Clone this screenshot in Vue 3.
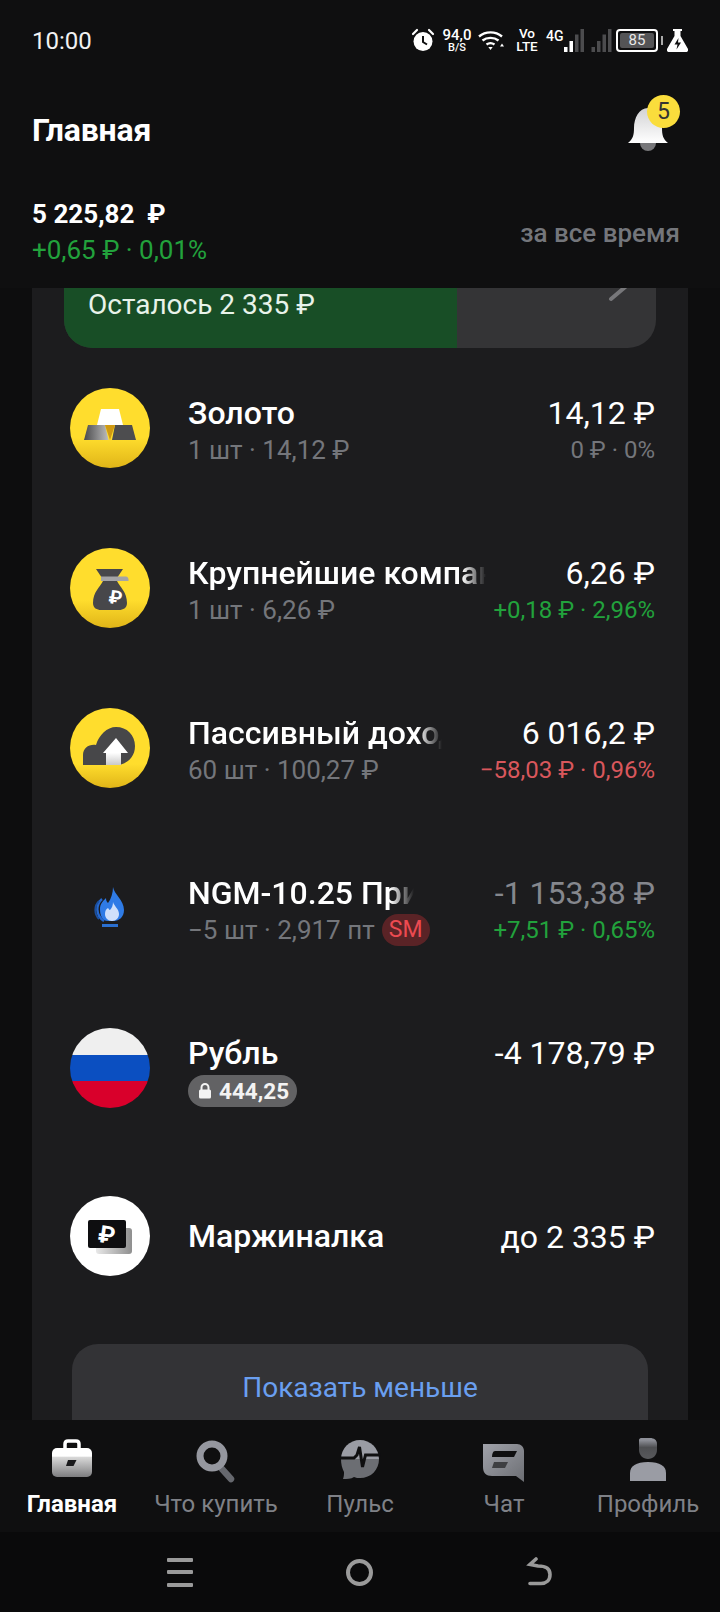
<script setup>
const rows = [
  { id: 'gold', name: 'Золото', sub: '1 шт · 14,12 ₽', value: '14,12 ₽', change: '0 ₽ · 0%', tone: 'flat' },
  { id: 'bag', name: 'Крупнейшие компании', sub: '1 шт · 6,26 ₽', value: '6,26 ₽', change: '+0,18 ₽ · 2,96%', tone: 'up', nameWidth: 298 },
  { id: 'cloud', name: 'Пассивный доход', sub: '60 шт · 100,27 ₽', value: '6 016,2 ₽', change: '−58,03 ₽ · 0,96%', tone: 'down', nameWidth: 254 },
  { id: 'gas', name: 'NGM-10.25 Природный газ', sub: '−5 шт · 2,917 пт', value: '-1 153,38 ₽', change: '+7,51 ₽ · 0,65%', tone: 'up', nameWidth: 226, badge: 'SM', muted: true },
  { id: 'flag', name: 'Рубль', pill: '444,25', value: '-4 178,79 ₽' },
  { id: 'margin', name: 'Маржиналка', value: 'до 2 335 ₽', single: true },
]
const tabs = [
  { id: 'home', label: 'Главная', active: true },
  { id: 'search', label: 'Что купить' },
  { id: 'pulse', label: 'Пульс' },
  { id: 'chat', label: 'Чат' },
  { id: 'profile', label: 'Профиль' },
]
</script>

<template>
  <div class="screen">
    <header class="head">
      <div class="status">
        <span class="time">10:00</span>
        <div class="sys">
          <svg class="i-alarm" width="24" height="24" viewBox="0 0 24 24">
            <circle cx="12" cy="13.5" r="9.5" fill="#fff" />
            <path d="M12 8v6l4 2.5" fill="none" stroke="#0f0f10" stroke-width="2" />
            <path d="M2 6l4-4M22 6l-4-4" stroke="#fff" stroke-width="2.2" stroke-linecap="round" />
          </svg>
          <div class="speed"><span class="speed-a">94,0</span><span class="speed-b">B/S</span></div>
          <svg class="i-wifi" width="27" height="24" viewBox="0 0 27 24">
            <path d="M1 8.5C7.5 3 17.5 3 24 8.5M4.5 12.5C9 9 16 9 20.500 12.500M8.500 16.500C11 14.800 14 14.800 16.500 16.500" fill="none" stroke="#fff" stroke-width="2.400" />
            <path d="M10.300 19h4.400l-2.200 3zM22 18.500h4l-2-3z" fill="#fff" />
          </svg>
          <div class="volte"><span>Vo</span><span>LTE</span></div>
          <span class="fourg">4G</span>
          <svg class="i-sig" width="20" height="24" viewBox="0 0 20 24">
            <rect x="0" y="19" width="3.500" height="5" fill="#fff" />
            <rect x="5.500" y="13" width="3.500" height="11" fill="#fff" />
            <rect x="11" y="6.500" width="3.500" height="17.500" fill="#4c4c4e" />
            <rect x="16.500" y="1" width="3.500" height="23" fill="#4c4c4e" />
          </svg>
          <svg class="i-sig2" width="21" height="24" viewBox="0 0 20 24">
            <rect x="0" y="19" width="3.500" height="5" fill="#4c4c4e" />
            <rect x="5.500" y="13" width="3.500" height="11" fill="#4c4c4e" />
            <rect x="11" y="6.500" width="3.500" height="17.500" fill="#4c4c4e" />
            <rect x="16.500" y="1" width="3.500" height="23" fill="#4c4c4e" />
          </svg>
          <div class="batt"><span class="batt-in">85</span></div>
          <span class="nub"></span>
          <svg class="i-flask" width="21" height="23" viewBox="0 0 21 23">
            <path d="M6 0h9v2h-1.500v5L21 20c.6 1.500-.4 3-2 3H2c-1.600 0-2.600-1.500-2-3L7.500 7V2H6z" fill="#fff" />
            <path d="M11.500 9l-4 6.500h3l-1 5 4.500-7h-3z" fill="#0f0f10" />
          </svg>
        </div>
      </div>

      <div class="title-row">
        <h1 class="title">Главная</h1>
        <div class="bell">
          <svg width="44" height="48" viewBox="0 0 44 48">
            <defs>
              <linearGradient id="bellg" x1="0" y1="0" x2="0" y2="1">
                <stop offset="0" stop-color="#d2d2d4" />
                <stop offset="1" stop-color="#ffffff" />
              </linearGradient>
            </defs>
            <circle cx="22" cy="37" r="8" fill="#77777a" />
            <path d="M2 37c5-4 6-8 6-15C8 12 13 2 22 2s14 10 14 20c0 7 1 11 6 15z" fill="url(#bellg)" />
          </svg>
          <span class="bell-badge">5</span>
        </div>
      </div>

      <div class="total-row">
        <div>
          <div class="total">5 225,82 &nbsp;₽</div>
          <div class="delta">+0,65 ₽ · 0,01%</div>
        </div>
        <span class="period">за все время</span>
      </div>
    </header>

    <main class="scroll">
      <section class="card">
        <div class="limit">
          <div class="limit-fill">
            <span class="limit-text">Осталось 2 335 ₽</span>
          </div>
          <svg class="limit-chev" width="24" height="24" viewBox="0 0 24 24">
            <path d="M4 3l13 11-13 11" transform="translate(0 -12)" fill="none" stroke="#77777a" stroke-width="4" stroke-linecap="round" />
          </svg>
        </div>

        <div v-for="r in rows" :key="r.id" class="row" :class="{ 'row-last': r.single }">
          <div class="ico">
            <svg v-if="r.id === 'gold'" width="80" height="80" viewBox="0 0 80 80">
              <defs>
                <linearGradient id="yg1" x1="0" y1="0" x2="0" y2="1"><stop offset="0" stop-color="#ffdd2d" /><stop offset=".62" stop-color="#ffdd2d" /><stop offset="1" stop-color="#e0b518" /></linearGradient>
                <linearGradient id="gl" x1="0" y1="0" x2="1" y2="0"><stop offset="0" stop-color="#4a4a4c" /><stop offset="1" stop-color="#bdbdbd" /></linearGradient>
              </defs>
              <circle cx="40" cy="40" r="40" fill="url(#yg1)" />
              <path d="M31 21h18l4 16H27z" fill="#fff" />
              <path d="M18 37h17l3.500 15H14z" fill="url(#gl)" />
              <path d="M45 37h17l4 15H42z" fill="#4d4d4f" />
              <path d="M35 37h10l-5 15z" fill="#d09a12" />
            </svg>
            <svg v-else-if="r.id === 'bag'" width="80" height="80" viewBox="0 0 80 80">
              <defs>
                <linearGradient id="yg2" x1="0" y1="0" x2="0" y2="1"><stop offset="0" stop-color="#ffdd2d" /><stop offset=".65" stop-color="#ffdd2d" /><stop offset="1" stop-color="#e0b518" /></linearGradient>
              </defs>
              <circle cx="40" cy="40" r="40" fill="url(#yg2)" />
              <path d="M26 21h27l-6 9H32z" fill="#47474a" />
              <path d="M23 55c0-11 7-16 10-22h14c3 6 10 11 10 22 0 5-4 7-8 7H31c-4 0-8-2-8-7z" fill="#47474a" />
              <path d="M31 28.500h25c1.500 0 2.500 1.500 2.500 3v1.500H31z" fill="#a4a4a6" />
              <text x="39" y="55" class="rub-ico" font-size="19" fill="#fff" transform="rotate(8 39 48)">₽</text>
            </svg>
            <svg v-else-if="r.id === 'cloud'" width="80" height="80" viewBox="0 0 80 80">
              <defs>
                <linearGradient id="yg3" x1="0" y1="0" x2="0" y2="1"><stop offset="0" stop-color="#ffdd2d" /><stop offset=".7" stop-color="#ffdd2d" /><stop offset="1" stop-color="#e0b518" /></linearGradient>
                <linearGradient id="arrow" x1="0" y1="0" x2="0" y2="1"><stop offset=".55" stop-color="#fff" /><stop offset="1" stop-color="#c9c9c9" /></linearGradient>
              </defs>
              <circle cx="40" cy="40" r="40" fill="url(#yg3)" />
              <path d="M13 57V47c0-7 6-11 13-10 3-10 11-18 20-18 11 0 19 8 19 19s-8 19-19 19z" fill="#474749" />
              <path d="M46 30l12 15h-7v12H36V45h-3z" fill="url(#arrow)" />
            </svg>
            <svg v-else-if="r.id === 'gas'" width="80" height="80" viewBox="0 0 80 80">
              <path d="M43 19C44 26 54 32 54 42C54 49 49 53 44 53H38C32 53 30 47 30 41C30 36 33 33 36 30C36 33 37 34 38 35C41 31 43 25 43 19Z" fill="#2f7be6" />
              <path d="M32 31C26 36 25 47 34 53" fill="none" stroke="#2568cf" stroke-width="2.400" />
              <path d="M29 33C24 38 24 46 29 51" fill="none" stroke="#1b4f9f" stroke-width="1.800" />
              <path d="M43 34C44 38 49 41 49 46C49 50 46 53 42 53C38 53 35 50 35 46C35 43 36 41 38 40C39 41 39 42 40 42C42 40 43 37 43 34Z" fill="#cfe0fb" />
              <rect x="32" y="56" width="16" height="3" fill="#2a6fd0" />
            </svg>
            <div v-else-if="r.id === 'flag'" class="flag"><i class="f-w"></i><i class="f-b"></i><i class="f-r"></i></div>
            <svg v-else width="80" height="80" viewBox="0 0 80 80">
              <defs>
                <linearGradient id="bk" x1="0" y1="0" x2="1" y2="0"><stop offset="0" stop-color="#e8e8e8" /><stop offset="1" stop-color="#8f8f8f" /></linearGradient>
              </defs>
              <circle cx="40" cy="40" r="40" fill="#fff" />
              <rect x="26" y="32" width="36" height="26" rx="3" fill="url(#bk)" />
              <rect x="18" y="24" width="38" height="28" rx="2" fill="#0e0e10" />
              <text x="37" y="47" class="rub-ico" text-anchor="middle" font-size="24" fill="#fff" transform="rotate(8 37 38)">₽</text>
            </svg>
          </div>

          <div class="info" :class="{ 'info-single': r.single, 'info-pill': r.pill }">
            <div class="name" :class="{ fade: r.nameWidth }" :style="r.nameWidth ? { width: r.nameWidth + 'px' } : null">{{ r.name }}</div>
            <div v-if="r.sub" class="sub">{{ r.sub }}<span v-if="r.badge" class="sm">{{ r.badge }}</span></div>
            <div v-if="r.pill" class="pill">
              <svg width="14" height="16" viewBox="0 0 14 16">
                <path d="M3.500 7V4.500a3.500 3.500 0 0 1 7 0V7" fill="none" stroke="#f3f3f3" stroke-width="2" />
                <rect x="1" y="6.500" width="12" height="9" rx="1.500" fill="#f3f3f3" />
              </svg>
              <span>{{ r.pill }}</span>
            </div>
          </div>

          <div class="nums" :class="{ 'nums-single': r.single, 'nums-top': r.pill }">
            <div class="value" :class="{ muted: r.muted }">{{ r.value }}</div>
            <div v-if="r.change" class="chg" :class="r.tone">{{ r.change }}</div>
          </div>
        </div>

        <button class="more">Показать меньше</button>
      </section>
    </main>

    <nav class="tabs">
      <div v-for="t in tabs" :key="t.id" class="tab" :class="{ on: t.active }">
        <svg width="48" height="48" viewBox="0 0 48 48">
          <template v-if="t.id === 'home'">
            <defs>
              <linearGradient id="brief" x1="0" y1="0" x2="0" y2="1"><stop offset=".28" stop-color="#fff" /><stop offset=".32" stop-color="#d8d8d8" /><stop offset="1" stop-color="#7d7d7f" /></linearGradient>
            </defs>
            <path d="M17 13V8c0-2 1-3 3-3h8c2 0 3 1 3 3v5" fill="none" stroke="#fff" stroke-width="3.500" />
            <rect x="4" y="12" width="40" height="29" rx="5" fill="url(#brief)" />
            <path d="M20 24h8.500l-3 6H18z" fill="#1a1a1c" />
          </template>
          <template v-else-if="t.id === 'search'">
            <path d="M30 33l9 10" stroke="#66686e" stroke-width="6.500" stroke-linecap="round" />
            <circle cx="20" cy="20" r="12" fill="none" stroke="#95979f" stroke-width="7" />
          </template>
          <template v-else-if="t.id === 'pulse'">
            <path d="M5 23a19 19 0 0 1 38 0z" fill="#9a9ca4" />
            <path d="M5 23h38c0 11-8 19-19 19-2 0-4 0-6-1-3 2-7 2-11 2 1-3 1-5 1-7-2-4-3-8-3-13z" fill="#6c6e73" />
            <path d="M4 22h14l3-3 2.500-8 3 20 3-12h15" fill="none" stroke="#0f0f10" stroke-width="3" />
          </template>
          <template v-else-if="t.id === 'chat'">
            <defs>
              <linearGradient id="chat" x1="0" y1="0" x2="1" y2="1"><stop offset="0" stop-color="#a0a2aa" /><stop offset="1" stop-color="#6c6e73" /></linearGradient>
            </defs>
            <path d="M3 8h34c4 0 7 3 7 7v31l-8-6H12C6 40 3 37 3 31z" fill="url(#chat)" />
            <path d="M15 15h22l-3 6H12c0-3 1-6 3-6z" fill="#0f0f10" />
            <path d="M14 26h14l-3 6H12z" fill="#3e3f42" />
          </template>
          <template v-else>
            <defs>
              <linearGradient id="head" x1="0" y1="0" x2="0" y2="1"><stop offset=".1" stop-color="#8e9098" /><stop offset=".45" stop-color="#4e4f52" /><stop offset="1" stop-color="#58595c" /></linearGradient>
            </defs>
            <path d="M15 4c0-1 1-2 2-2h9c4 0 7 2 7 6v6c0 5-4 9-9 9s-9-4-9-9z" fill="url(#head)" />
            <path d="M6 45V37c0-7 6-11 18-11s18 4 18 11v8z" fill="#9a9ca4" />
          </template>
        </svg>
        <span class="tab-label">{{ t.label }}</span>
      </div>
    </nav>

    <footer class="nav">
      <div class="burger"><i></i><i></i><i></i></div>
      <span class="home-btn"></span>
      <svg width="28" height="30" viewBox="0 0 28 30">
        <path d="M10 2L4 7.500l8 1.500c7 0 12 1.500 12 8.500 0 6-4 9-9 9H4" fill="none" stroke="#9a9a9a" stroke-width="3.600" stroke-linecap="round" />
      </svg>
    </footer>
  </div>
</template>

<style scoped>
.screen { width: 720px; height: 1612px; display: flex; flex-direction: column; background: #0d0d0e; color: #fff; font-family: Roboto, "Noto Sans", sans-serif; overflow: hidden; }
.head { height: 288px; flex: none; background: #0f0f10; display: flex; flex-direction: column; padding: 0 40px 0 32px; box-sizing: border-box; }
.status { height: 80px; flex: none; display: flex; align-items: center; justify-content: space-between; margin-right: -8px; }
.time { font-size: 24px; color: #f2f2f2; margin-top: 2px; }
.sys { display: flex; align-items: center; height: 24px; }
.i-alarm { margin-right: 7px; }
.speed { display: flex; flex-direction: column; align-items: center; width: 30px; margin-right: 6px; line-height: 1; }
.speed-a { font-size: 15px; font-weight: 500; line-height: 14px; }
.speed-b { font-size: 11px; font-weight: 500; line-height: 11px; }
.i-wifi { margin-right: 11px; }
.volte { display: flex; flex-direction: column; align-items: center; font-size: 13.500px; font-weight: 500; line-height: 13px; width: 22px; margin-right: 8px; }
.fourg { font-size: 14px; font-weight: 500; width: 18px; margin-top: -9px; }
.i-sig { margin-right: 7px; }
.i-sig2 { margin-right: 4px; }
.batt { width: 42px; height: 23px; border: 2px solid #fff; border-radius: 4px; box-sizing: border-box; padding: 2px; display: flex; }
.batt-in { flex: 1; background: #545456; border-radius: 2px; font-size: 15px; line-height: 15px; text-align: center; color: #e8e8e8; }
.nub { width: 2px; height: 9px; background: #aaa; margin: 0 4px 0 3px; }
.title-row { height: 100px; flex: none; display: flex; align-items: center; justify-content: space-between; }
.title { margin: 0; font-size: 32px; font-weight: 700; letter-spacing: -.2px; line-height: 40px; }
.bell { position: relative; width: 44px; height: 48px; margin: 4px 14px 0 0; }
.bell svg { display: block; margin-left: 4px; margin-top: -2px; }
.bell-badge { position: absolute; left: 25px; top: -13px; width: 33px; height: 33px; border-radius: 50%; background: #fadd3c; color: #333; font-size: 23px; line-height: 33px; text-align: center; }
.total-row { display: flex; align-items: center; justify-content: space-between; margin-top: 16px; }
.total { font-size: 26px; font-weight: 700; line-height: 36px; }
.delta { font-size: 26px; line-height: 36px; color: #22a23c; }
.period { font-size: 26px; font-weight: 500; color: #74767b; margin-top: 2px; }
.scroll { flex: none; height: 1132px; overflow: hidden; padding: 0 32px; }
.card { background: #1c1c1e; height: 1200px; }
.limit { height: 100px; margin: -40px 32px 0; background: #343436; border-radius: 0 0 28px 28px; position: relative; overflow: hidden; }
.limit-fill { width: 393px; height: 100%; background: #184e26; display: flex; align-items: flex-end; box-sizing: border-box; padding: 0 0 26px 24px; }
.limit-text { font-size: 28px; line-height: 34px; color: #e8f3ea; }
.limit-chev { position: absolute; right: 25px; top: 38px; }
.row { height: 160px; display: flex; align-items: center; padding: 0 33px 0 38px; }
.row-last { margin-top: 8px; }
.ico { width: 80px; height: 80px; flex: none; margin-right: 38px; }
.ico svg { display: block; }
.flag { width: 80px; height: 80px; border-radius: 50%; overflow: hidden; display: flex; flex-direction: column; }
.flag i { flex: 1; display: block; }
.f-w { background: #efefef; }
.f-b { background: #0b4fc1; }
.f-r { background: #d9002b; }
.info { flex: 1; min-width: 0; padding-top: 8px; }
.info-single { padding-top: 0; }
.info-pill { padding-top: 5px; }
.name { font-size: 32px; font-weight: 500; line-height: 36px; white-space: nowrap; overflow: hidden; }
.fade { -webkit-mask-image: linear-gradient(to right, #000 calc(100% - 24px), transparent); mask-image: linear-gradient(to right, #000 calc(100% - 24px), transparent); }
.sub { font-size: 26px; line-height: 38px; color: #74767b; white-space: nowrap; display: flex; align-items: center; }
.sm { display: inline-block; margin-left: 7px; width: 48px; height: 32px; border-radius: 16px; background: #5a2326; color: #ec4a51; font-size: 23px; line-height: 32px; text-align: center; }
.pill { display: inline-flex; align-items: center; gap: 7px; height: 32px; padding: 0 8px 0 10px; margin-top: 4px; border-radius: 16px; background: #626264; font-size: 22.500px; font-weight: 700; color: #f3f3f3; }
.nums { flex: none; text-align: right; white-space: nowrap; padding-top: 8px; }
.nums-single { padding-top: 2px; }
.nums-top { padding-top: 0; margin-top: -30px; }
.value { font-size: 32px; line-height: 36px; }
.muted { color: #85878d; }
.chg { font-size: 24px; line-height: 38px; }
.flat { color: #74767b; }
.up { color: #22a23c; }
.down { color: #d9575c; }
.more { display: block; width: 576px; height: 120px; margin: 28px 0 0 40px; border: 0; border-radius: 26px; background: #333336; color: #6a9ff0; font: 400 28px/28px Roboto, sans-serif; padding: 0 0 32px; }
.tabs { height: 112px; flex: none; background: #0f0f10; display: flex; }
.tab { width: 144px; display: flex; flex-direction: column; align-items: center; color: #7f8187; }
.tab svg { display: block; margin-top: 16px; }
.tab-label { font-size: 24px; line-height: 32px; margin-top: 4px; }
.on { color: #fff; }
.on .tab-label { font-size: 24px; font-weight: 700; }
.nav { flex: 1; background: #0a0a0b; display: flex; align-items: center; padding: 0 166px 0 167px; justify-content: space-between; }
.burger { width: 26px; display: flex; flex-direction: column; gap: 8.500px; }
.burger i { display: block; height: 4px; background: #9a9a9a; border-radius: 1px; }
.home-btn { width: 27px; height: 27px; border: 4px solid #9a9a9a; border-radius: 50%; box-sizing: border-box; }
</style>

<style>
html, body { margin: 0; background: #0d0d0e; }
.rub-ico { font-family: Roboto, sans-serif; font-weight: 700; }
</style>
